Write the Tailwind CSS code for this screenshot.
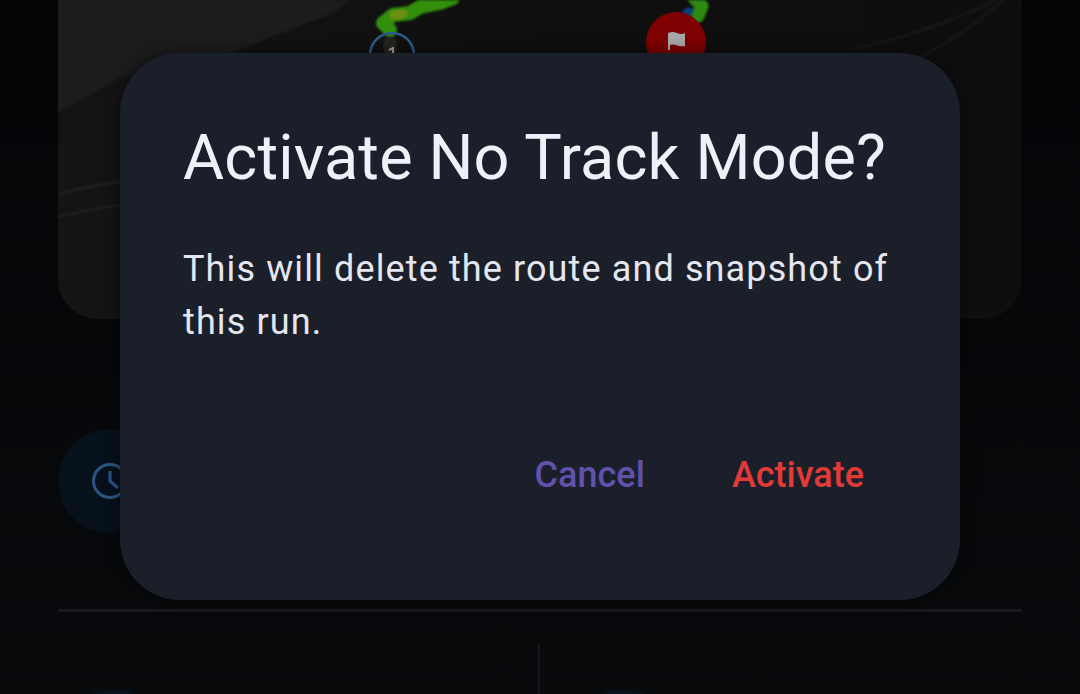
<!DOCTYPE html>
<html lang="en">
  <head>
    <meta charset="UTF-8" />
    <title>No Track Mode</title>
    <meta name="viewport" content="width=device-width, initial-scale=1.0" />
    <script src="https://cdn.jsdelivr.net/npm/@tailwindcss/browser@4"></script>
  </head>
  <body class="bg-[#07090b] font-['Roboto',sans-serif]">
    <div class="relative w-[1080px] h-[694px] overflow-hidden bg-gradient-to-b from-[#040507] to-[#080a0c]">
      <!-- page behind the scrim -->
      <div class="px-[58px] flex flex-col">
        <div class="relative h-[319px] rounded-b-[40px] bg-gradient-to-r from-[#141414] via-[#0f0f0f] to-[#0e0e0e] overflow-hidden">
          <svg class="absolute inset-0 blur-[1px]" width="964" height="319" viewBox="0 0 964 319" fill="none">
            <path d="M-4 -4 V115 L62 78 L175 52 L275 13 L300 -4Z" fill="#1c1c1c" />
            <path d="M-4 195 Q30 186 62 182" stroke="#222222" stroke-width="2.5" />
            <path d="M-4 218 Q30 209 62 205" stroke="#202020" stroke-width="2.5" />
            <path d="M789 50 Q862 36 939 0" stroke="#181818" stroke-width="2.5" />
            <path d="M862 57 Q910 32 945 0" stroke="#181818" stroke-width="2.5" />
            <!-- route -->
            <path d="M332 58 V38" stroke="#25251c" stroke-width="12" />
            <path d="M332 30 L325 23 L335 15 L352 13 L362 7 L382 3 L395 -2" stroke="#328f0c" stroke-width="14" stroke-linecap="round" stroke-linejoin="round" />
            <path d="M336 15 L345 14" stroke="#6f8f12" stroke-width="9" stroke-linecap="round" />
            <path d="M630 13 L636 14" stroke="#0b3f78" stroke-width="11" stroke-linecap="round" />
            <path d="M640 16 L644 6 L636 -2" stroke="#2c8a12" stroke-width="13" stroke-linecap="round" stroke-linejoin="round" />
          </svg>
          <svg class="absolute inset-0" width="964" height="319" viewBox="0 0 964 319" fill="none">
            <!-- start marker -->
            <circle cx="334" cy="55" r="22" stroke="#2b5a8c" stroke-width="2.5" />
            <path d="M331 50 L335 48 V54" stroke="#a0a0a0" stroke-width="2" />
            <!-- finish marker -->
            <circle cx="618" cy="42" r="30" fill="#7f0000" />
            <path d="M610 50 V33 Q615 31 619 33 Q623 35 627 33 V46 Q622 47 618 45 Q614 44 612 45 V50 Z" fill="#a8a8a8" />
          </svg>
        </div>

        <div class="mt-[110px] w-[104px] h-[104px] rounded-full bg-[#07111b] flex items-center justify-center">
          <svg width="38" height="38" viewBox="0 0 38 38" fill="none" stroke="#2a5687" stroke-width="3">
            <circle cx="19" cy="19" r="16.5" />
            <path d="M19 9 V19 L27 26" />
          </svg>
        </div>

        <div class="mt-[76px] h-[3px] bg-[#17191b]"></div>

        <div class="mt-[32px] h-[60px] flex">
          <div class="w-[482px] border-r-2 border-[#15171a] relative">
            <div class="absolute left-[4px] top-[45px] w-[104px] h-[104px] rounded-full bg-[#07111b]"></div>
          </div>
          <div class="flex-1 relative">
            <div class="absolute left-[31px] top-[45px] w-[104px] h-[104px] rounded-full bg-[#07111b]"></div>
          </div>
        </div>
      </div>

      <!-- dialog -->
      <div class="absolute left-[120px] top-[53px] w-[840px] h-[547px] rounded-[60px] bg-[#1b1f2a] shadow-[0_0_16px_rgba(0,0,0,0.5)]">
        <h1 class="absolute left-[63px] top-[70px] text-[63px] leading-[70px] font-normal text-[#eef0fa] tracking-[0.17px] whitespace-nowrap">Activate No Track Mode?</h1>
        <p class="absolute left-[63px] top-[190px] w-[720px] text-[36px] leading-[53px] text-[#e4e6f0] tracking-[1.12px]">This will delete the route and snapshot of this run.</p>
        <div class="absolute right-[96px] top-[401px] flex gap-[87px] text-[36px] leading-[42px] font-medium">
          <button class="text-[#6150ac] tracking-[0.05px]">Cancel</button>
          <button class="text-[#e13a37]">Activate</button>
        </div>
      </div>
    </div>
  </body>
</html>
